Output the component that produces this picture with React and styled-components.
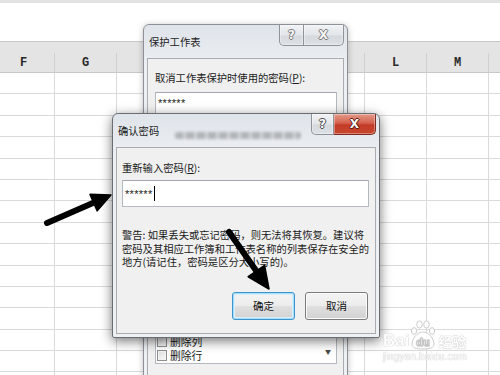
import React from "react";
import styled, { createGlobalStyle } from "styled-components";

// the ninth column runs off the right edge; its letter is not in view
const COLS = ["F", "G", "H", "I", "J", "K", "L", "M", ""];
const ROWS = Array.from({ length: 15 });
const LIST_ITEMS = [
  "选定锁定单元格",
  "选定未锁定的单元格",
  "设置单元格格式",
  "设置列格式",
  "设置行格式",
  "插入列",
  "插入行",
  "插入超链接",
  "删除列",
  "删除行",
];

// head of an arrow drawn from (x1,y1) to the tip (x2,y2)
const arrow = (x1, y1, x2, y2, hl, hw) => {
  const dx = x2 - x1;
  const dy = y2 - y1;
  const len = Math.hypot(dx, dy);
  const ux = dx / len;
  const uy = dy / len;
  const bx = x2 - ux * hl;
  const by = y2 - uy * hl;
  return {
    shaft: { x1, y1, x2: bx + ux * 3, y2: by + uy * 3 },
    head: `${x2},${y2} ${bx - uy * hw},${by + ux * hw} ${bx + uy * hw},${by - ux * hw}`,
  };
};

const ARROWS = [arrow(47, 223, 111, 195, 19, 9), arrow(229, 232, 269, 289, 22, 10)];

const App = () => {
  return (
    <Screen>
      <GlobalStyle />
      <TopBar />
      <Sheet>
        <HeaderStrip />
        <ColRow $h={20} $head>
          {COLS.map((c, i) => (
            <ColHead key={i}>{c}</ColHead>
          ))}
        </ColRow>
        {ROWS.map((_, i) => (
          <ColRow key={i} $h={21.4}>
            {COLS.map((c, j) => (
              <Cell key={j} />
            ))}
          </ColRow>
        ))}
      </Sheet>

      <Window $x={143} $y={24} $w={205} $h={400}>
        <TitleBar>
          <Title>保护工作表</Title>
          <Caption>
            <CaptionBtn $w={25} $left>
              <Glyph>?</Glyph>
            </CaptionBtn>
            <CaptionBtn $w={40}>
              <Glyph>X</Glyph>
            </CaptionBtn>
          </Caption>
        </TitleBar>
        <Panel $pad="12px 6px 0 7px">
          <Label>
            取消工作表保护时使用的密码(<u>P</u>):
          </Label>
          <TextBox $h={22} $mt={7}>
            ******
          </TextBox>
          <CheckRow $mt={10}>
            <Check />
            <span>保护工作表及锁定的单元格内容(<u>C</u>)</span>
          </CheckRow>
          <Label $mt={8}>
            允许此工作表的所有用户进行(<u>O</u>):
          </Label>
          <ListBox>
            <ListItems>
              {LIST_ITEMS.map((t) => (
                <CheckRow key={t}>
                  <Check />
                  <span>{t}</span>
                </CheckRow>
              ))}
            </ListItems>
            <ScrollBar>▼</ScrollBar>
          </ListBox>
        </Panel>
      </Window>

      <Window $x={112} $y={113} $w={268} $h={225} $active>
        <TitleBar>
          <Title>确认密码</Title>
          <GlassBlur aria-hidden="true" />
          <Caption>
            <CaptionBtn $w={23} $left $active>
              <Glyph $active>?</Glyph>
            </CaptionBtn>
            <CaptionBtn $w={42} $close $active>
              <Glyph $active $close>
                X
              </Glyph>
            </CaptionBtn>
          </Caption>
        </TitleBar>
        <Panel $pad="13px 6px 0 5px">
          <Label>
            重新输入密码(<u>R</u>):
          </Label>
          <TextBox $h={27} $mt={5}>
            ******
            <Caret />
          </TextBox>
          <Warning>
            警告: 如果丢失或忘记密码，则无法将其恢复。建议将
            <br />
            密码及其相应工作簿和工作表名称的列表保存在安全的
            <br />
            地方(请记住，密码是区分大小写的)。
          </Warning>
          <ButtonRow>
            <Button $primary>确定</Button>
            <Button>取消</Button>
          </ButtonRow>
        </Panel>
      </Window>

      <Watermark>
        <WmLogo>
          <WmBai>Bai</WmBai>
          <svg width="28" height="30" viewBox="0 0 28 30">
            <g fill="#fff" stroke="#c6c6c6" strokeWidth="1">
              <ellipse cx="5" cy="11" rx="2.6" ry="3.4" />
              <ellipse cx="10.5" cy="4.5" rx="2.8" ry="3.6" />
              <ellipse cx="17.5" cy="4.5" rx="2.8" ry="3.6" />
              <ellipse cx="23" cy="11" rx="2.6" ry="3.4" />
              <path d="M14 12 C8 12 3 19 3 24 C3 28 7 29 14 29 C21 29 25 28 25 24 C25 19 20 12 14 12 Z" />
            </g>
            <text
              x="14"
              y="26"
              textAnchor="middle"
              fontFamily="Liberation Sans, sans-serif"
              fontWeight="bold"
              fontSize="11"
              fill="#fff"
              stroke="#bdbdbd"
              strokeWidth="0.6"
            >
              du
            </text>
          </svg>
          <WmJy>经验</WmJy>
        </WmLogo>
        <WmUrl>jingyan.baidu.com</WmUrl>
      </Watermark>

      <Arrows viewBox="0 0 500 375">
        {ARROWS.map((a, i) => (
          <g key={i}>
            <line {...a.shaft} stroke="#000" strokeWidth="6" strokeLinecap="round" />
            <polygon points={a.head} fill="#000" stroke="#000" strokeWidth="1.5" strokeLinejoin="round" />
          </g>
        ))}
      </Arrows>
    </Screen>
  );
};

export default App;

const GlobalStyle = createGlobalStyle`
  html, body {
    margin: 0;
    padding: 0;
    background: #fff;
  }
  body {
    width: 500px;
    height: 375px;
    overflow: hidden;
    font-family: "Noto Sans CJK SC", "Noto Sans", sans-serif;
  }
`;

const Screen = styled.div`
  position: relative;
  width: 500px;
  height: 375px;
  overflow: hidden;
  background: #fff;
`;

const TopBar = styled.div`
  height: 38px;
  border-top: 3px solid #e3e3e3;
  background: #fff;
`;

const Sheet = styled.div`
  margin-left: -7px;
  width: 558px;
`;

const HeaderStrip = styled.div`
  height: 11px;
  background: #e4e4e4;
  border-top: 1px solid #c9c9c9;
`;

const ColRow = styled.div`
  display: grid;
  grid-template-columns: repeat(9, 62px);
  height: ${(p) => p.$h}px;
  background: ${(p) => (p.$head ? "#e4e4e4" : "#fff")};
`;

const ColHead = styled.div`
  display: flex;
  align-items: center;
  justify-content: center;
  box-sizing: border-box;
  border-right: 1px solid #d0d0d0;
  border-bottom: 1px solid #c8c8c8;
  font: bold 12px "Liberation Mono", monospace;
  color: #2a2a2a;
`;

const Cell = styled.div`
  box-sizing: border-box;
  border-right: 1px solid #dadada;
  border-bottom: 1px solid #dadada;
`;

const Window = styled.div`
  position: absolute;
  left: ${(p) => p.$x}px;
  top: ${(p) => p.$y}px;
  width: ${(p) => p.$w}px;
  height: ${(p) => p.$h}px;
  box-sizing: border-box;
  display: flex;
  flex-direction: column;
  padding: 0 3px 3px;
  border: 1px solid ${(p) => (p.$active ? "#6a6e73" : "#8d9197")};
  border-radius: 6px 6px 2px 2px;
  background: linear-gradient(#dfe4ea, #eceff3 40px, #eef1f4);
  box-shadow: ${(p) =>
    p.$active ? "0 3px 12px rgba(0, 0, 0, 0.55)" : "0 1px 6px rgba(0, 0, 0, 0.25)"};
`;

const TitleBar = styled.div`
  height: 33px;
  flex: none;
  display: flex;
  align-items: flex-start;
`;

const Title = styled.span`
  align-self: center;
  padding-left: 2px;
  font-size: 10.3px;
  color: #1a1a1a;
  white-space: nowrap;
`;

/* the Aero glass lets the dialog behind show through, smeared */
const GlassBlur = styled.span`
  align-self: center;
  flex: 1;
  height: 7px;
  margin: 10px 10px 0 16px;
  border-radius: 3px;
  background: repeating-linear-gradient(
    90deg,
    rgba(80, 80, 80, 0.35) 0 8px,
    rgba(80, 80, 80, 0.15) 8px 11px
  );
  filter: blur(1.6px);
`;

const Caption = styled.div`
  display: flex;
  margin-left: auto;
`;

const CaptionBtn = styled.div`
  width: ${(p) => p.$w}px;
  height: 21px;
  box-sizing: border-box;
  display: flex;
  align-items: center;
  justify-content: center;
  border: 1px solid ${(p) => (p.$close && p.$active ? "#7e2a20" : "#8e939a")};
  border-top: none;
  border-left-width: ${(p) => (p.$left ? 1 : 0)}px;
  border-radius: ${(p) => (p.$left ? "0 0 0 5px" : "0 0 5px 0")};
  background: ${(p) =>
    p.$close && p.$active
      ? "linear-gradient(#e49a8a, #d4624e 45%, #c33b26 55%, #c8472f)"
      : "linear-gradient(#f1f3f5, #e2e5e9 50%, #d5d9de 55%, #dde1e5)"};
  box-shadow: inset 0 0 0 1px rgba(255, 255, 255, 0.35);
`;

const Glyph = styled.span`
  font: bold 12px "DejaVu Sans", sans-serif;
  line-height: 1;
  color: ${(p) => (p.$active ? "#fff" : "#f4f4f4")};
  text-shadow: ${(p) => {
    const c = p.$close ? "#5a1a12" : p.$active ? "#4a4a4a" : "#7c7c7c";
    return `1px 0 0 ${c}, -1px 0 0 ${c}, 0 1px 0 ${c}, 0 -1px 0 ${c}`;
  }};
`;

const Panel = styled.div`
  flex: 1;
  min-height: 0;
  overflow: hidden;
  display: flex;
  flex-direction: column;
  border: 1px solid #a9adb2;
  background: #f0f0f0;
  padding: ${(p) => p.$pad};
`;

const Label = styled.div`
  flex: none;
  height: 14px;
  line-height: 14px;
  margin-top: ${(p) => p.$mt || 0}px;
  font-size: 10.3px;
  color: #1a1a1a;
  white-space: nowrap;
`;

const TextBox = styled.div`
  flex: none;
  height: ${(p) => p.$h}px;
  margin-top: ${(p) => p.$mt}px;
  box-sizing: border-box;
  display: flex;
  align-items: center;
  padding-left: 2px;
  background: #fff;
  border: 1px solid #b5b8be;
  border-top-color: #a3a6ac;
  font: 11px "Liberation Sans", sans-serif;
  letter-spacing: 0.3px;
  color: #222;
`;

const Caret = styled.span`
  width: 1px;
  height: 15px;
  margin-left: 1px;
  background: #000;
`;

const Warning = styled.div`
  flex: none;
  margin-top: 21px;
  font-size: 10.3px;
  line-height: 13.5px;
  color: #1a1a1a;
  white-space: nowrap;
`;

const ButtonRow = styled.div`
  flex: none;
  display: flex;
  justify-content: flex-end;
  gap: 10px;
  margin: 23px 1px 0 0;
`;

const Button = styled.div`
  width: 63px;
  height: 28px;
  box-sizing: border-box;
  display: flex;
  align-items: center;
  justify-content: center;
  border: 1px solid ${(p) => (p.$primary ? "#3d95d0" : "#7b7b7b")};
  border-radius: 3px;
  background: linear-gradient(#f4f4f4, #ececec 50%, #dfdfdf 52%, #d2d2d2);
  box-shadow: ${(p) =>
    p.$primary ? "inset 0 0 0 1px #a9dcf6, inset 0 0 0 2px #d8effc" : "inset 0 0 0 1px #fbfbfb"};
  font-size: 10.5px;
  color: #111;
`;

const CheckRow = styled.div`
  flex: none;
  height: 14px;
  display: flex;
  align-items: center;
  gap: 3px;
  margin-top: ${(p) => p.$mt || 0}px;
  font-size: 10.8px;
  color: #1a1a1a;
  white-space: nowrap;
`;

const Check = styled.span`
  width: 10px;
  height: 11px;
  box-sizing: border-box;
  flex: none;
  border: 1px solid #8e8f8f;
  background: linear-gradient(135deg, #dcdcdc, #fbfbfb);
  box-shadow: inset 0 0 0 1px #f2f2f2;
`;

const ListBox = styled.div`
  flex: none;
  height: 198px;
  margin-top: 6px;
  box-sizing: border-box;
  display: flex;
  background: #fff;
  border: 1px solid #b5b8be;
`;

const ListItems = styled.div`
  flex: 1;
  min-width: 0;
  overflow: hidden;
  display: flex;
  flex-direction: column;
  justify-content: flex-end;
  padding: 0 0 1px 1px;
`;

const ScrollBar = styled.div`
  width: 16px;
  display: flex;
  align-items: flex-end;
  justify-content: center;
  padding-bottom: 7px;
  box-sizing: border-box;
  font-size: 6px;
  color: #4a4a4a;
`;

const Watermark = styled.div`
  position: absolute;
  left: 383px;
  top: 320px;
  display: flex;
  flex-direction: column;
  color: #fff;
  text-shadow: 0 0 1px #b8b8b8, 0 0 1px #b8b8b8;
  opacity: 0.9;
`;

const WmLogo = styled.div`
  display: flex;
  align-items: flex-end;
`;

const WmBai = styled.span`
  font: bold 17px "Liberation Sans", sans-serif;
  line-height: 17px;
  margin-bottom: 1px;
`;

const WmJy = styled.span`
  font: bold 14px "Noto Sans CJK SC", sans-serif;
  line-height: 18px;
  margin-left: 1px;
`;

const WmUrl = styled.span`
  font: 10px "Liberation Sans", sans-serif;
  margin-top: 1px;
  letter-spacing: 0.2px;
`;

const Arrows = styled.svg`
  position: absolute;
  left: 0;
  top: 0;
  width: 500px;
  height: 375px;
  pointer-events: none;
`;
